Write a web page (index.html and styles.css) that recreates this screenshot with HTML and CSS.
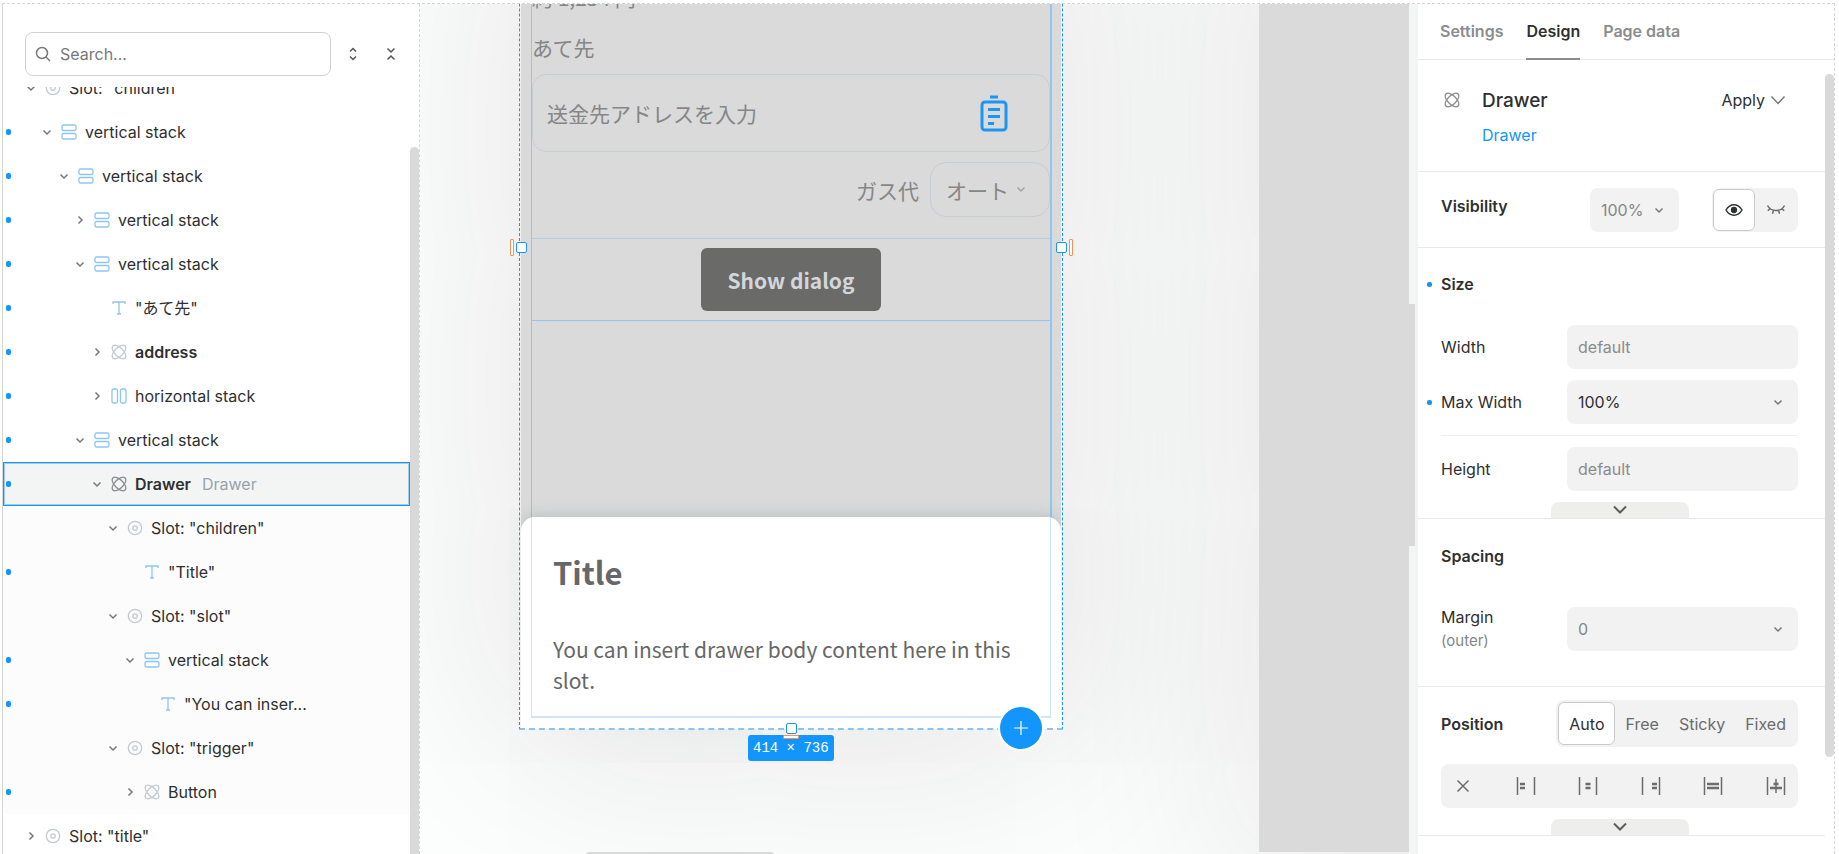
FILE: index.html
```html
<!DOCTYPE html>
<html lang="en">
<head>
    <meta charset="UTF-8">
    <meta name="viewport" content="width=device-width, initial-scale=1.0">
    <title>Studio</title>
    <link rel="stylesheet" href="styles.css">
</head>
<body>
    <svg class="sprite" aria-hidden="true">
        <symbol id="down" viewBox="0 0 12 12"><path d="M2.5 4.5 6 8l3.5-3.5"/></symbol>
        <symbol id="right" viewBox="0 0 12 12"><path d="M4.5 2.5 8 6 4.5 9.500"/></symbol>
        <symbol id="vstack" viewBox="0 0 16 16"><rect x="1" y="1" width="14" height="5.500" rx="1.500"/><rect x="1" y="9.500" width="14" height="5.500" rx="1.500"/></symbol>
        <symbol id="hstack" viewBox="0 0 16 16"><rect x="1" y="1" width="5.500" height="14" rx="1.500"/><rect x="9.500" y="1" width="5.500" height="14" rx="1.500"/></symbol>
        <symbol id="slot" viewBox="0 0 16 16"><circle cx="8" cy="8" r="6.700"/><circle cx="8" cy="8" r="2.200"/></symbol>
        <symbol id="text" viewBox="0 0 16 16"><path d="M2 4V2h12v2M8 2v12M6 14h4"/></symbol>
        <symbol id="comp" viewBox="0 0 16 16"><ellipse cx="8" cy="8" rx="8.600" ry="4.300" transform="rotate(45 8 8)"/><ellipse cx="8" cy="8" rx="8.600" ry="4.300" transform="rotate(-45 8 8)"/></symbol>
    </svg>

    <div class="workspace">
        <aside class="sidebar">
            <div class="searchBar">
                <label class="searchBox">
                    <svg class="searchIcon" viewBox="0 0 16 16"><circle cx="7" cy="7" r="5.500"/><path d="m11 11 4 4"/></svg>
                    <input type="text" placeholder="Search..." aria-label="Search">
                </label>
                <button class="iconButton" aria-label="Expand all"><svg viewBox="0 0 14 14"><path d="M4 4.500 7 1.500l3 3M4 9.500l3 3 3-3"/></svg></button>
                <button class="iconButton" aria-label="Collapse all"><svg viewBox="0 0 14 14"><path d="m3.500 1.500 3.500 3.500 3.500-3.500M3.500 12.500 7 9l3.500 3.500"/></svg></button>
            </div>
            <div class="treeArea">
                <ul class="tree">
                    <li class="row"><svg class="arrow"><use href="#down"/></svg><svg class="nodeIcon grey"><use href="#slot"/></svg><span>Slot: "children"</span></li>
                    <li class="row dot level1"><svg class="arrow"><use href="#down"/></svg><svg class="nodeIcon"><use href="#vstack"/></svg><span>vertical stack</span></li>
                    <li class="row dot level2"><svg class="arrow"><use href="#down"/></svg><svg class="nodeIcon"><use href="#vstack"/></svg><span>vertical stack</span></li>
                    <li class="row dot level3"><svg class="arrow"><use href="#right"/></svg><svg class="nodeIcon"><use href="#vstack"/></svg><span>vertical stack</span></li>
                    <li class="row dot level3"><svg class="arrow"><use href="#down"/></svg><svg class="nodeIcon"><use href="#vstack"/></svg><span>vertical stack</span></li>
                    <li class="row dot level4"><svg class="arrow"></svg><svg class="nodeIcon"><use href="#text"/></svg><span>"あて先"</span></li>
                    <li class="row dot level4"><svg class="arrow"><use href="#right"/></svg><svg class="nodeIcon grey"><use href="#comp"/></svg><b>address</b></li>
                    <li class="row dot level4"><svg class="arrow"><use href="#right"/></svg><svg class="nodeIcon"><use href="#hstack"/></svg><span>horizontal stack</span></li>
                    <li class="row dot level3"><svg class="arrow"><use href="#down"/></svg><svg class="nodeIcon"><use href="#vstack"/></svg><span>vertical stack</span></li>
                    <li class="row dot level4 selected"><svg class="arrow"><use href="#down"/></svg><svg class="nodeIcon dark"><use href="#comp"/></svg><b>Drawer</b><span class="type">Drawer</span></li>
                    <li class="row level5 inside"><svg class="arrow"><use href="#down"/></svg><svg class="nodeIcon grey"><use href="#slot"/></svg><span>Slot: "children"</span></li>
                    <li class="row dot level6 inside"><svg class="arrow"></svg><svg class="nodeIcon"><use href="#text"/></svg><span>"Title"</span></li>
                    <li class="row level5 inside"><svg class="arrow"><use href="#down"/></svg><svg class="nodeIcon grey"><use href="#slot"/></svg><span>Slot: "slot"</span></li>
                    <li class="row dot level6 inside"><svg class="arrow"><use href="#down"/></svg><svg class="nodeIcon"><use href="#vstack"/></svg><span>vertical stack</span></li>
                    <li class="row dot level7 inside"><svg class="arrow"></svg><svg class="nodeIcon"><use href="#text"/></svg><span>"You can inser...</span></li>
                    <li class="row level5 inside"><svg class="arrow"><use href="#down"/></svg><svg class="nodeIcon grey"><use href="#slot"/></svg><span>Slot: "trigger"</span></li>
                    <li class="row dot level6 inside"><svg class="arrow"><use href="#right"/></svg><svg class="nodeIcon grey"><use href="#comp"/></svg><span>Button</span></li>
                    <li class="row"><svg class="arrow"><use href="#right"/></svg><svg class="nodeIcon grey"><use href="#slot"/></svg><span>Slot: "title"</span></li>
                </ul>
                <div class="treeScroll"></div>
            </div>
        </aside>

        <main class="canvas">
            <div class="artboard nextBoard"></div>
            <div class="artboard mobile">
                <div class="screen" lang="ja">
                    <p class="line">約 1,234 円</p>
                    <label class="line addressLabel" for="address">あて先</label>
                    <div class="addressBox">
                        <input type="text" id="address" placeholder="送金先アドレスを入力">
                        <svg class="clipboard" viewBox="0 0 28 38"><path d="M10 3h8"/><rect x="2" y="8" width="24" height="28" rx="3"/><path d="M8 15.500h12M8 22.500h12M8 29.500h6"/></svg>
                    </div>
                    <div class="gasRow">
                        <label for="gas">ガス代</label>
                        <div class="gasSelect">
                            <select id="gas"><option>オート</option></select>
                            <svg class="arrow"><use href="#down"/></svg>
                        </div>
                    </div>
                    <div class="dialogStack">
                        <button class="dialogButton">Show dialog</button>
                    </div>
                </div>
                <section class="drawer">
                    <h2>Title</h2>
                    <p>You can insert drawer body content here in this slot.</p>
                </section>
                <div class="drawerOutline"></div>
                <div class="selection"></div>
                <span class="handle leftHandle"></span>
                <span class="handle rightHandle"></span>
                <span class="sizeTag">414 × 736</span>
                <span class="handle bottomHandle"></span>
                <span class="spacer leftSpacer"></span>
                <span class="spacer rightSpacer"></span>
                <span class="spacer bottomSpacer"></span>
                <button class="addButton" aria-label="Add"><svg viewBox="0 0 16 16"><path d="M8 1v14M1 8h14"/></svg></button>
            </div>
            <div class="scrollX"></div>
            <div class="scrollY"></div>
        </main>

        <aside class="panel">
            <nav class="tabs">
                <button>Settings</button>
                <button class="active">Design</button>
                <button>Page data</button>
            </nav>
            <div class="panelBody">
                <div class="sections">
                    <section class="section element">
                        <svg class="nodeIcon dark"><use href="#comp"/></svg>
                        <div class="elementName">
                            <h1>Drawer</h1>
                            <a href="#">Drawer</a>
                        </div>
                        <button class="apply">Apply <svg viewBox="0 0 16 16"><path d="m1.500 4.500 6.500 7 6.500-7"/></svg></button>
                    </section>

                    <section class="section visibility">
                        <label class="heading" for="opacity">Visibility</label>
                        <div class="select opacity">
                            <select id="opacity"><option>100%</option></select>
                            <svg class="arrow"><use href="#down"/></svg>
                        </div>
                        <div class="eyes">
                            <button class="active" aria-label="Visible"><svg viewBox="0 0 18 18"><path d="M1 9s3-5.200 8-5.200S17 9 17 9s-3 5.200-8 5.200S1 9 1 9Z"/><circle cx="9" cy="9" r="2.400" fill="currentColor"/></svg></button>
                            <button aria-label="Hidden"><svg viewBox="0 0 18 18"><path d="M0.500 4.500C2 7.500 5 9.500 9 9.500s7-2 8.500-5M3.200 7.500.8 9.800M6.500 9.200 5.500 12.800M11.500 9.200l1 3.600M14.800 7.500l2.400 2.300"/></svg></button>
                        </div>
                    </section>

                    <section class="section size">
                        <h3 class="heading changed">Size</h3>
                        <div class="field">
                            <label for="width">Width</label>
                            <input type="text" id="width" placeholder="default">
                        </div>
                        <div class="field">
                            <label class="changed" for="maxWidth">Max Width</label>
                            <div class="select solid">
                                <select id="maxWidth"><option>100%</option></select>
                                <svg class="arrow"><use href="#down"/></svg>
                            </div>
                        </div>
                        <hr>
                        <div class="field">
                            <label for="height">Height</label>
                            <input type="text" id="height" placeholder="default">
                        </div>
                        <button class="more" aria-label="More size options"><svg viewBox="0 0 16 16"><path d="m2 4.500 6 6 6-6"/></svg></button>
                    </section>

                    <section class="section spacing">
                        <h3 class="heading">Spacing</h3>
                        <div class="field">
                            <label for="margin">Margin<small>(outer)</small></label>
                            <div class="select">
                                <select id="margin"><option>0</option></select>
                                <svg class="arrow"><use href="#down"/></svg>
                            </div>
                        </div>
                    </section>

                    <section class="section position">
                        <div class="positionRow">
                            <h3 class="heading">Position</h3>
                            <div class="modes">
                                <button class="active">Auto</button>
                                <button>Free</button>
                                <button>Sticky</button>
                                <button>Fixed</button>
                            </div>
                        </div>
                        <div class="align">
                            <button aria-label="None"><svg viewBox="0 0 20 20"><path d="m4.500 4.500 11 11M15.500 4.500l-11 11"/></svg></button>
                            <button aria-label="Left"><svg viewBox="0 0 20 20"><path d="M1.500 1v18M18.500 1v18"/><path class="thick" d="M4 8h5M4 12h5"/></svg></button>
                            <button aria-label="Center"><svg viewBox="0 0 20 20"><path d="M1.500 1v18M18.500 1v18"/><path class="thick" d="M7.500 8h5M7.500 12h5"/></svg></button>
                            <button aria-label="Right"><svg viewBox="0 0 20 20"><path d="M1.500 1v18M18.500 1v18"/><path class="thick" d="M11 8h5M11 12h5"/></svg></button>
                            <button aria-label="Stretch"><svg viewBox="0 0 20 20"><path d="M1.500 1v18M18.500 1v18"/><path class="thick" d="M4 8h12M4 12h12"/></svg></button>
                            <button aria-label="Center stretch"><svg viewBox="0 0 20 20"><path d="M1.500 1v18M18.500 1v18M10 3v14"/><path class="thick" d="M7.500 8h5M4 12h12"/></svg></button>
                        </div>
                        <button class="more" aria-label="More position options"><svg viewBox="0 0 16 16"><path d="m2 4.500 6 6 6-6"/></svg></button>
                    </section>
                </div>
                <div class="panelScroll"></div>
            </div>
        </aside>
    </div>
</body>
</html>
```

FILE: styles.css
```css
* {
    margin: 0;
    padding: 0;
    box-sizing: border-box;
}

body {
    font-family: Inter, "Noto Sans CJK JP", sans-serif;
    font-size: 16px;
    line-height: 24px;
    color: #2f3031;
    background: #fff;
    height: 100vh;
    padding: 3px 4px 0 2px;
    overflow: hidden;
}

button, input, select {
    font: inherit;
    color: inherit;
    background: none;
    border: none;
    outline: none;
    appearance: none;
}

button {
    cursor: pointer;
}

svg {
    flex: none;
    fill: none;
    stroke: currentColor;
    stroke-width: 1.5;
    overflow: visible;
}

.sprite {
    position: absolute;
    width: 0;
    height: 0;
}

.arrow {
    width: 12px;
    height: 12px;
    color: #77787a;
}

.workspace {
    display: flex;
    height: 100%;
    border-top: 1px dashed #d4d5d6;
    border-left: 1px solid #d4d5d6;
    border-right: 1px dashed #d4d5d6;
}

/* element tree */
.sidebar {
    display: flex;
    flex-direction: column;
    flex: none;
    width: 417px;
    border-right: 1px dashed #d4d5d6;
}

.searchBar {
    display: flex;
    align-items: center;
    flex: none;
    padding: 28px 19px 11px 22px;
}

.searchBox {
    display: flex;
    align-items: center;
    flex: 1;
    height: 44px;
    padding: 0 9px;
    gap: 9px;
    border: 1px solid #d0d1d3;
    border-radius: 8px;
    margin-right: 12px;
}

.searchBox input {
    flex: 1;
    min-width: 0;
}

.searchIcon {
    width: 16px;
    height: 16px;
    color: #77787a;
}

input::placeholder {
    color: #77787a;
    opacity: 1;
}

.iconButton {
    display: flex;
    align-items: center;
    justify-content: center;
    width: 19px;
    height: 32px;
    margin-left: 19px;
    color: #555657;
}

.iconButton:first-of-type {
    margin-left: 0;
}

.iconButton svg {
    width: 14px;
    height: 14px;
}

.treeArea {
    display: flex;
    flex: 1;
    min-height: 0;
    overflow: hidden;
}

.tree {
    flex: 1;
    list-style: none;
    margin-top: -21px;
}

.row {
    display: flex;
    align-items: center;
    height: 44px;
    padding-left: 22px;
    position: relative;
    white-space: nowrap;
}

.row .nodeIcon {
    margin: 0 8px;
}

.row b {
    font-weight: 600;
}

.nodeIcon {
    width: 16px;
    height: 16px;
    color: #8ec5f2;
    stroke-width: 1.3;
}

.nodeIcon.grey {
    color: #c2cad3;
}

.nodeIcon.dark {
    color: #8b8d90;
}

.level1 { padding-left: 38px; }
.level2 { padding-left: 55px; }
.level3 { padding-left: 71px; }
.level4 { padding-left: 88px; }
.level5 { padding-left: 104px; }
.level6 { padding-left: 121px; }
.level7 { padding-left: 137px; }

.dot::before {
    content: '';
    position: absolute;
    left: 3px;
    top: 19px;
    width: 5px;
    height: 6px;
    border-radius: 2px;
    background: #1296fb;
}

.selected {
    background: #f3f5f5;
    box-shadow: inset 0 0 0 1px #1a94ef, inset 0 0 0 2px #9fcdf2;
}

.selected .type {
    margin-left: 11px;
    color: #98a2ad;
}

.inside {
    background: #fcfcfc;
}

.treeScroll {
    width: 9px;
    margin-top: 60px;
    border-radius: 5px 5px 0 0;
    background: #d9d9d9;
}

/* canvas */
.canvas {
    flex: 1;
    position: relative;
    overflow: hidden;
    background: #fdfefe;
}

.artboard {
    position: absolute;
    background: #dadada;
    box-shadow: 0 10px 200px 20px rgba(25, 25, 15, 0.12);
}

.mobile {
    left: 101px;
    top: -235px;
    width: 540px;
    height: 960px;
    font-family: "Noto Sans CJK JP", sans-serif;
    font-size: 21px;
    line-height: 30px;
    color: #858687;
}

.nextBoard {
    left: 839px;
    top: -235px;
    width: 540px;
    height: 1083px;
}

.screen {
    display: flex;
    flex-direction: column;
    height: 949px;
    margin: 0 9px 0 10px;
    padding-top: 213px;
    border: 1px solid #90c6f0;
    border-width: 0 2px 1px 1px;
}

.addressLabel {
    margin: 20px 0 12px;
}

.addressBox {
    display: flex;
    align-items: center;
    height: 78px;
    padding: 0 41px 0 14px;
    border: 1px solid #c8cdd5;
    border-radius: 14px;
}

.addressBox input {
    flex: 1;
    min-width: 0;
}

.addressBox input::placeholder {
    color: #858687;
}

.clipboard {
    width: 28px;
    height: 38px;
    color: #1a96f6;
    stroke-width: 3;
}

.gasRow {
    display: flex;
    justify-content: flex-end;
    align-items: center;
    gap: 11px;
    margin: 10px 0 21px;
}

.gasSelect {
    position: relative;
    width: 120px;
    height: 55px;
    border: 1px solid #c8cdd5;
    border-radius: 16px;
}

.gasSelect select {
    width: 100%;
    height: 100%;
    padding-left: 15px;
}

.gasSelect .arrow {
    position: absolute;
    right: 22px;
    top: 20px;
    color: #a3a4a6;
}

.dialogStack {
    display: flex;
    justify-content: center;
    padding: 9px 0;
    border-top: 1px solid #b4cde2;
    border-bottom: 1px solid #90c6f0;
}

.dialogButton {
    height: 63px;
    padding: 0 26px;
    font-size: 21px;
    font-weight: 600;
    color: #d3d6da;
    background: #6a6a69;
    border-radius: 6px;
}

.drawer {
    position: absolute;
    left: 0;
    right: 0;
    bottom: 0;
    height: 212px;
    padding: 33px 32px;
    color: #666768;
    background: #fff;
    border-radius: 14px 14px 0 0;
    box-shadow: 0 -2px 14px rgba(100, 115, 135, 0.25);
    clip-path: inset(-20px 0 0 0);
}

.drawer h2 {
    font-size: 31px;
    line-height: 44px;
    font-weight: 700;
    margin-bottom: 40px;
}

.drawer p {
    line-height: 31px;
}

.drawerOutline {
    position: absolute;
    left: 10px;
    right: 10px;
    bottom: 11px;
    height: 201px;
    border: 1px solid #cfe5f7;
    border-width: 0 1px 2px;
}

.selection {
    position: absolute;
    inset: 0 -2px -1px;
    border: 1px dashed #1a94f5;
    border-width: 0 1px 2px;
    border-bottom-color: #8dc3f0;
}

.handle {
    position: absolute;
    width: 11px;
    height: 11px;
    background: #fff;
    border: 1px solid #1a94f5;
    border-radius: 2px;
}

.leftHandle {
    left: -5px;
    top: 473px;
}

.rightHandle {
    right: -6px;
    top: 473px;
}

.bottomHandle {
    left: 265px;
    bottom: -5px;
}

.spacer {
    position: absolute;
    width: 4px;
    height: 17px;
    background: #fff;
    border: 1px solid #f2935c;
    border-radius: 1px;
}

.leftSpacer {
    left: -11px;
    top: 470px;
}

.rightSpacer {
    right: -12px;
    top: 470px;
}

.bottomSpacer {
    left: 262px;
    bottom: -10px;
    width: 16px;
    height: 4px;
}

.sizeTag {
    position: absolute;
    left: 227px;
    bottom: -32px;
    padding: 0 5px;
    font-family: "Liberation Mono", monospace;
    font-size: 14px;
    line-height: 26px;
    white-space: nowrap;
    color: #fff;
    background: #1296fb;
    border-radius: 3px;
}

.addButton {
    position: absolute;
    right: 17px;
    bottom: -22px;
    display: flex;
    align-items: center;
    justify-content: center;
    width: 46px;
    height: 46px;
    color: #fff;
    background: #1296fb;
    border: 2px solid #fff;
    border-radius: 50%;
}

.addButton svg {
    width: 16px;
    height: 16px;
    stroke-width: 1.2;
}

.scrollX {
    position: absolute;
    left: 165px;
    bottom: -7px;
    width: 190px;
    height: 9px;
    border-radius: 5px;
    background: #d9d9d9;
}

.scrollY {
    position: absolute;
    right: 0;
    top: 0;
    width: 9px;
    height: 100%;
    background: #f4f6f6;
    border-right: 3px solid #f3f4f4;
}

.scrollY::before {
    content: '';
    position: absolute;
    top: 300px;
    left: 0;
    width: 6px;
    height: 242px;
    background: #d9d9d9;
}

/* right panel */
.panel {
    display: flex;
    flex-direction: column;
    flex: none;
    width: 416px;
}

.tabs {
    display: flex;
    gap: 23px;
    flex: none;
    height: 56px;
    padding-left: 22px;
    border-bottom: 1px solid #e6e7e8;
}

.tabs button {
    height: 56px;
    font-weight: 600;
    color: #8b8c8e;
    border-bottom: 2px solid transparent;
}

.tabs .active {
    color: #2f3031;
    border-bottom-color: #8b8c8e;
}

.panelBody {
    display: flex;
    flex: 1;
    min-height: 0;
}

.sections {
    flex: 1;
}

.section {
    border-bottom: 1px solid #e8e9ea;
    padding: 0 27px 0 23px;
}

.heading {
    font-size: 16px;
    line-height: 24px;
    font-weight: 600;
}

.element {
    display: flex;
    align-items: flex-start;
    padding-top: 28px;
    height: 112px;
}

.element .nodeIcon {
    margin: 4px 22px 0 3px;
}

.elementName {
    flex: 1;
}

.element h1 {
    font-size: 19px;
    line-height: 26px;
    font-weight: 500;
}

.element a {
    display: block;
    margin-top: 9px;
    color: #1296fb;
    text-decoration: none;
}

.apply {
    display: flex;
    align-items: center;
    gap: 5px;
    margin-right: 12px;
}

.apply svg {
    width: 16px;
    height: 16px;
    color: #77787a;
}

.visibility {
    display: flex;
    align-items: center;
    height: 76px;
}

.visibility .heading {
    flex: 1;
    padding-bottom: 8px;
}

.select {
    position: relative;
    color: #858687;
}

.solid {
    color: #2f3031;
}

.select select, .field input {
    width: 100%;
    height: 44px;
    padding: 0 11px;
    background: #f2f2f2;
    border-radius: 8px;
}

.field input::placeholder {
    color: #8b8c8e;
}

.select .arrow {
    position: absolute;
    right: 14px;
    top: 16px;
}

.opacity {
    width: 89px;
    margin-right: 33px;
}

.eyes, .modes {
    display: flex;
    background: #f2f2f2;
    border-radius: 8px;
}

.eyes {
    padding: 1px;
}

.eyes button {
    display: flex;
    align-items: center;
    justify-content: center;
    width: 42px;
    height: 42px;
    color: #6b6c6d;
}

.eyes svg {
    width: 18px;
    height: 18px;
}

.eyes .active, .modes .active {
    color: #2f3031;
    background: #fff;
    border: 1px solid #c8cbce;
    border-radius: 6px;
}

.size {
    padding-top: 24px;
}

.size .heading {
    margin-bottom: 29px;
}

.changed {
    position: relative;
}

.changed::before {
    content: '';
    position: absolute;
    left: -14px;
    top: 10px;
    width: 5px;
    height: 5px;
    border-radius: 2px;
    background: #1296fb;
}

.field {
    display: grid;
    grid-template-columns: 126px 1fr;
    align-items: center;
}

.field + .field {
    margin-top: 11px;
}

.field small {
    display: block;
    font-size: 15px;
    color: #858687;
}

hr {
    border: none;
    border-top: 1px solid #eeeff0;
    margin: 11px 0;
}

.more {
    display: flex;
    align-items: center;
    justify-content: center;
    width: 138px;
    height: 16px;
    margin: 11px auto 0;
    color: #5b5c5d;
    background: #eeeeed;
    border-radius: 8px 8px 0 0;
}

.more svg {
    width: 16px;
    height: 16px;
    stroke-width: 2;
}

.spacing {
    padding-top: 25px;
    padding-bottom: 33px;
}

.spacing .heading {
    margin-bottom: 37px;
}

.position {
    padding-top: 13px;
}

.positionRow {
    display: flex;
    align-items: center;
    justify-content: space-between;
}

.modes {
    padding: 2px;
}

.modes button {
    height: 43px;
    padding: 0 10px;
    color: #6b6c6d;
}

.align {
    display: flex;
    justify-content: space-between;
    align-items: center;
    height: 44px;
    margin-top: 17px;
    padding: 0 12px;
    background: #f2f2f2;
    border-radius: 8px;
    color: #6b6c6d;
}

.align button {
    display: flex;
}

.align svg {
    width: 20px;
    height: 20px;
}

.align .thick {
    stroke-width: 2.5;
}

.panelScroll {
    width: 9px;
    height: 86%;
    margin-top: 14px;
    border-radius: 5px;
    background: #d9d9d9;
}
```
